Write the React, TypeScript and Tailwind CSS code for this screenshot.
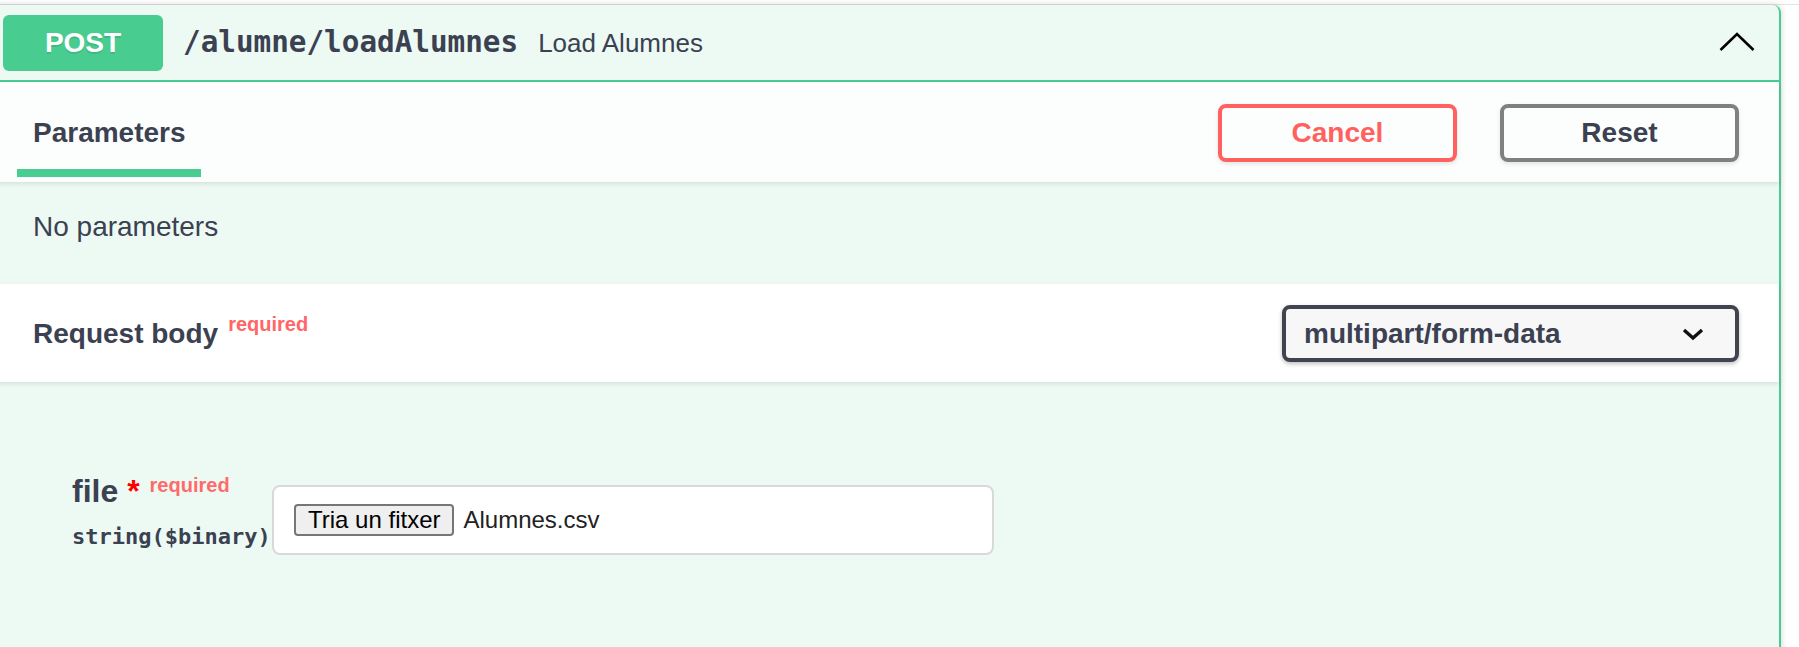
/**
 * Swagger operation block: POST /alumne/loadAlumnes (expanded, try-out mode)
 */

const sans = 'font-["Liberation_Sans",Arial,sans-serif]';
const mono = 'font-["DejaVu_Sans_Mono","Liberation_Mono",monospace]';

function ChevronUp() {
  return (
    <svg width="36" height="20" viewBox="0 0 36 20" fill="none">
      <polyline points="1.5,18 18,2 34.5,18" stroke="#000" strokeWidth="2.6" />
    </svg>
  );
}

function ChevronDown() {
  return (
    <svg width="24" height="14" viewBox="0 0 24 14" fill="none">
      <polyline points="3,3 12,11 21,3" stroke="#111" strokeWidth="3.4" />
    </svg>
  );
}

export default function App() {
  return (
    <div className={`${sans} w-[1799px] h-[647px] overflow-hidden bg-white text-[#3b4151]`}>
      {/* faint line above the block */}
      <div className="h-[4px]" />
      <div className="h-px bg-[#e3e3e3]" />

      <div className="ml-[-9px] w-[1790px] h-[700px] bg-[#edfaf4] border-x-2 border-[#49cc90] rounded-tr-[8px] shadow-[0_0_6px_rgba(0,0,0,0.19)]">
        {/* Summary */}
        <div className="flex items-center h-[77px] pl-[10px] pr-[24px] border-b-2 border-[#49cc90]">
          <div className="flex items-center justify-center w-[160px] h-[56px] rounded-[6px] bg-[#49cc90] text-white text-[28px] font-bold [text-shadow:0_2px_0_rgba(0,0,0,0.1)]">
            POST
          </div>
          <div className={`${mono} px-[20px] text-[29.3px] font-bold leading-none`}>/alumne/loadAlumnes</div>
          <div className="flex-1 text-[26px] leading-none">Load Alumnes</div>
          <div className="mt-[-1px]">
            <ChevronUp />
          </div>
        </div>

        {/* Parameters tab header */}
        <div className="relative flex justify-between h-[100px] px-[40px] bg-[rgba(255,255,255,0.8)] shadow-[0_2px_4px_rgba(0,0,0,0.1)]">
          <div className="flex flex-col pt-[35px]">
            <div className="text-[28px] font-bold leading-[32px]">Parameters</div>
            <div className="mt-[20px] ml-[-16px] w-[184px] h-[8px] bg-[#49cc90]" />
          </div>
          <div className="flex items-center gap-[43px] pt-[1px]">
            <button className="w-[239px] h-[58px] rounded-[8px] border-4 border-[#ff6060] text-[#ff6060] text-[28px] font-bold shadow-[0_2px_4px_rgba(0,0,0,0.1)]">
              Cancel
            </button>
            <button className="w-[239px] h-[58px] rounded-[8px] border-4 border-[#808080] text-[#3b4151] text-[28px] font-bold shadow-[0_2px_4px_rgba(0,0,0,0.1)]">
              Reset
            </button>
          </div>
        </div>

        {/* No parameters */}
        <div className="px-[40px] pt-[24px] pb-[36px]">
          <p className="text-[28px] leading-[42px]">No parameters</p>
        </div>

        {/* Request body header */}
        <div className="relative flex items-center justify-between h-[98px] px-[40px] bg-white shadow-[0_2px_4px_rgba(0,0,0,0.1)]">
          <h4 className="mt-[4px] text-[28px] font-bold leading-[32px]">
            Request body
            <span className="relative top-[-12px] pl-[10px] text-[20px] text-[#ff6666]">required</span>
          </h4>
          <div className="flex items-center justify-between w-[457px] h-[57px] mt-[1px] pl-[18px] pr-[30px] rounded-[8px] border-4 border-[#41444e] bg-[#f7f7f7] shadow-[0_2px_4px_rgba(0,0,0,0.25)]">
            <span className="text-[28px] font-bold">multipart/form-data</span>
            <ChevronDown />
          </div>
        </div>

        {/* Request body form */}
        <div className="flex items-start pl-[79px] pt-[90px]">
          <div className="w-[200px]">
            <div className="flex items-baseline leading-[38px] whitespace-nowrap">
              <span className="text-[32px] font-bold">file</span>
              <span className="text-[32px] font-bold text-[#ff0000]">&nbsp;*</span>
              <span className="relative top-[-10px] pl-[10px] text-[20px] font-bold text-[#ff6b6b]">required</span>
            </div>
            <div className={`${mono} mt-[9px] text-[22px] font-bold leading-[28px] text-[#3b4151]`}>string($binary)</div>
          </div>
          <div className="flex items-center w-[722px] h-[70px] mt-[13px] px-[20px] rounded-[8px] border-2 border-[#d9d9d9] bg-white">
            <div className="flex items-center h-[32px] px-[12px] rounded-[4px] border-2 border-[#767676] bg-[#efefef] text-[24px] text-black leading-none">
              Tria un fitxer
            </div>
            <span className="ml-[9px] text-[24px] text-[#222] leading-none">Alumnes.csv</span>
          </div>
        </div>
      </div>
    </div>
  );
}
